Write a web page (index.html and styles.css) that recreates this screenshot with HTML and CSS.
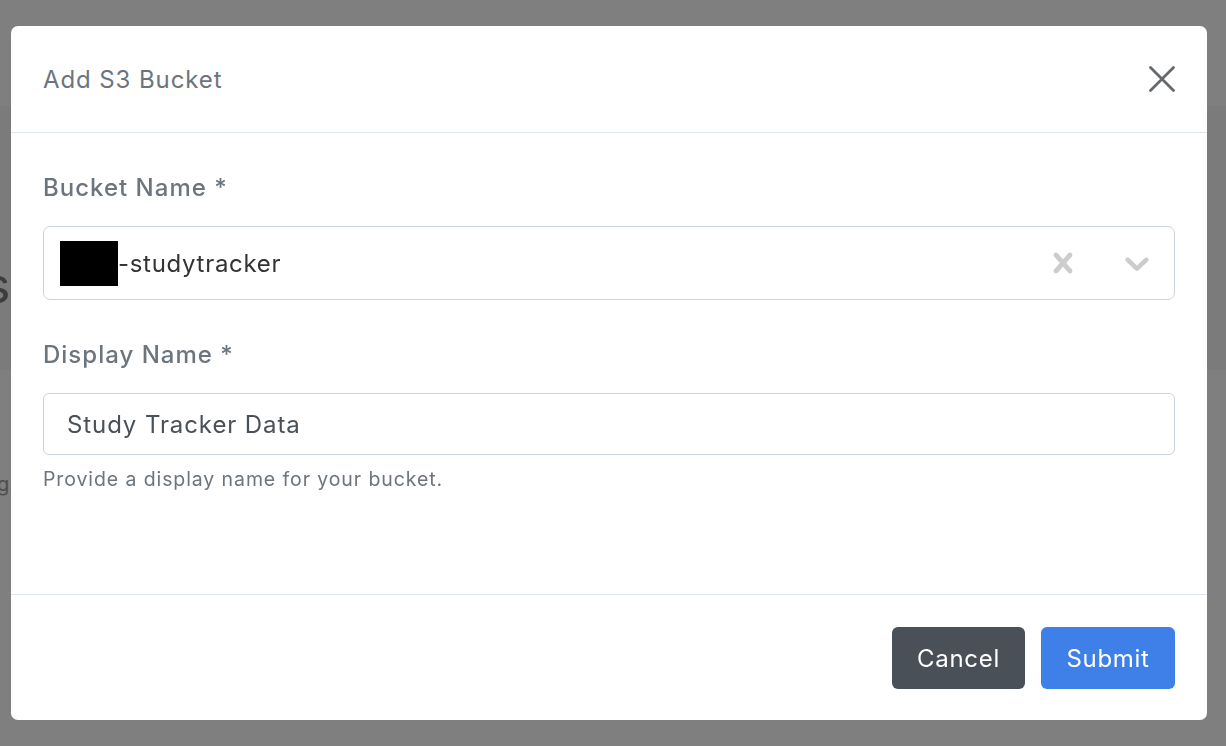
FILE: index.html
```html
<!DOCTYPE html>
<html lang="en">
<head>
<meta charset="utf-8">
<title>Add S3 Bucket</title>
<link rel="stylesheet" href="styles.css">
</head>
<body>
<div class="page">
  <div class="topbar"></div>
  <div class="hero"><h1 class="hero-title">s</h1></div>
  <div class="content"><p class="content-text">g</p></div>
</div>
<div class="backdrop"></div>
<div class="modal" role="dialog" aria-labelledby="modal-title">
  <div class="modal-header">
    <h5 class="modal-title" id="modal-title">Add S3 Bucket</h5>
    <button class="close-btn" type="button" aria-label="Close">
      <svg viewBox="0 0 26 26" width="26" height="26"><path d="M1.5 1.5 L24.5 24.5 M24.5 1.5 L1.5 24.5" stroke="#66696c" stroke-width="2.8" stroke-linecap="round" fill="none"/></svg>
    </button>
  </div>
  <div class="modal-body">
    <div class="form-group">
      <label class="form-label">Bucket Name *</label>
      <div class="select">
        <div class="select-value"><span class="redacted"></span>-studytracker</div>
        <div class="select-indicators">
          <div class="indicator">
            <svg viewBox="0 0 20 20" width="40" height="40"><path fill="#cccccc" d="M14.348 14.849c-0.469 0.469-1.229 0.469-1.697 0l-2.651-3.030-2.651 3.029c-0.469 0.469-1.229 0.469-1.697 0-0.469-0.469-0.469-1.229 0-1.697l2.758-3.15-2.759-3.152c-0.469-0.469-0.469-1.228 0-1.697s1.228-0.469 1.697 0l2.652 3.031 2.651-3.031c0.469-0.469 1.228-0.469 1.697 0s0.469 1.229 0 1.697l-2.758 3.152 2.758 3.15c0.469 0.469 0.469 1.229 0 1.698z"/></svg>
          </div>
          <div class="indicator">
            <svg viewBox="0 0 20 20" width="40" height="40"><path fill="#cccccc" d="M4.516 7.548c0.436-0.446 1.043-0.481 1.576 0l3.908 3.747 3.908-3.747c0.533-0.481 1.141-0.446 1.574 0 0.436 0.445 0.408 1.197 0 1.615-0.406 0.418-4.695 4.502-4.695 4.502-0.217 0.223-0.502 0.335-0.787 0.335s-0.57-0.112-0.789-0.335c0 0-4.287-4.084-4.695-4.502s-0.436-1.170 0-1.615z"/></svg>
          </div>
        </div>
      </div>
    </div>
    <div class="form-group second">
      <label class="form-label">Display Name *</label>
      <div class="text-input">Study Tracker Data</div>
      <small class="form-help">Provide a display name for your bucket.</small>
    </div>
  </div>
  <div class="modal-footer">
    <button class="btn btn-secondary" type="button">Cancel</button>
    <button class="btn btn-primary" type="button">Submit</button>
  </div>
</div>
</body>
</html>
```

FILE: styles.css
```css
* { box-sizing: border-box; }
html, body { margin: 0; padding: 0; }
body {
  width: 1226px;
  height: 746px;
  overflow: hidden;
  background: #ffffff;
  font-family: Inter, "Open Sans", "Liberation Sans", sans-serif;
}
.page { display: flex; flex-direction: column; }
.topbar { height: 106px; background: #ffffff; }
.hero { height: 264px; background: #f6f6f6; overflow: hidden; }
.hero-title {
  margin: 154px 0 0 -16px;
  font-size: 50px;
  font-weight: 400;
  line-height: 1;
  color: #787878;
}
.content { height: 376px; background: #ffffff; overflow: hidden; }
.content-text {
  margin: 102px 0 0 -3px;
  font-size: 20px;
  color: #9a9a9a;
}
.backdrop {
  position: fixed;
  inset: 0;
  background: rgba(0, 0, 0, 0.5);
}
.modal {
  position: absolute;
  left: 11px;
  top: 26px;
  width: 1196px;
  height: 694px;
  background: #ffffff;
  border-radius: 7px;
  display: flex;
  flex-direction: column;
}
.modal-header {
  height: 107px;
  border-bottom: 1px solid #dde6ef;
  padding: 0 32px;
  display: flex;
  align-items: center;
  justify-content: space-between;
}
.modal-title {
  margin: 2px 0 0;
  font-size: 24px;
  font-weight: 400;
  letter-spacing: 0.9px;
  color: #6c757d;
  line-height: 1.5;
}
.close-btn {
  border: 0;
  background: none;
  padding: 0;
  width: 26px;
  height: 26px;
  display: flex;
  cursor: pointer;
}
.modal-body {
  flex: 1;
  padding: 38px 32px 0;
}
.form-group { display: flex; flex-direction: column; }
.form-group.second { margin-top: 38px; }
.form-label {
  font-size: 24px;
  line-height: 34px;
  font-weight: 500;
  letter-spacing: 1px;
  color: #6c757d;
  margin-bottom: 21px;
}
.select {
  height: 74px;
  border: 1px solid #cdd3db;
  border-radius: 7px;
  display: flex;
  align-items: center;
}
.select-value {
  flex: 1;
  padding: 0 16px;
  font-size: 24px;
  letter-spacing: 0.7px;
  color: #333333;
  display: flex;
  align-items: center;
}
.redacted {
  display: inline-block;
  width: 58px;
  height: 45px;
  background: #000000;
}
.select-indicators { display: flex; align-items: center; }
.indicator {
  width: 74px;
  height: 56px;
  display: flex;
  align-items: center;
  justify-content: center;
}
.indicator svg { display: block; }
.text-input {
  height: 62px;
  border: 1px solid #cdd3db;
  border-radius: 6px;
  padding: 0 23px;
  display: flex;
  align-items: center;
  font-size: 24px;
  letter-spacing: 0.9px;
  color: #495057;
}
.form-help {
  margin-top: 10px;
  font-size: 19.5px;
  line-height: 28px;
  color: #6c757d;
  letter-spacing: 0.9px;
}
.modal-footer {
  border-top: 1px solid #dde6ef;
  padding: 32px 32px 31px;
  display: flex;
  justify-content: flex-end;
  gap: 16px;
}
.btn {
  height: 62px;
  border: 0;
  border-radius: 6px;
  font-family: inherit;
  font-size: 24px;
  letter-spacing: 0.7px;
  color: #ffffff;
  padding: 0;
  cursor: pointer;
}
.btn-secondary { background: #495057; width: 133px; }
.btn-primary { background: #3e80e7; width: 134px; }
```
